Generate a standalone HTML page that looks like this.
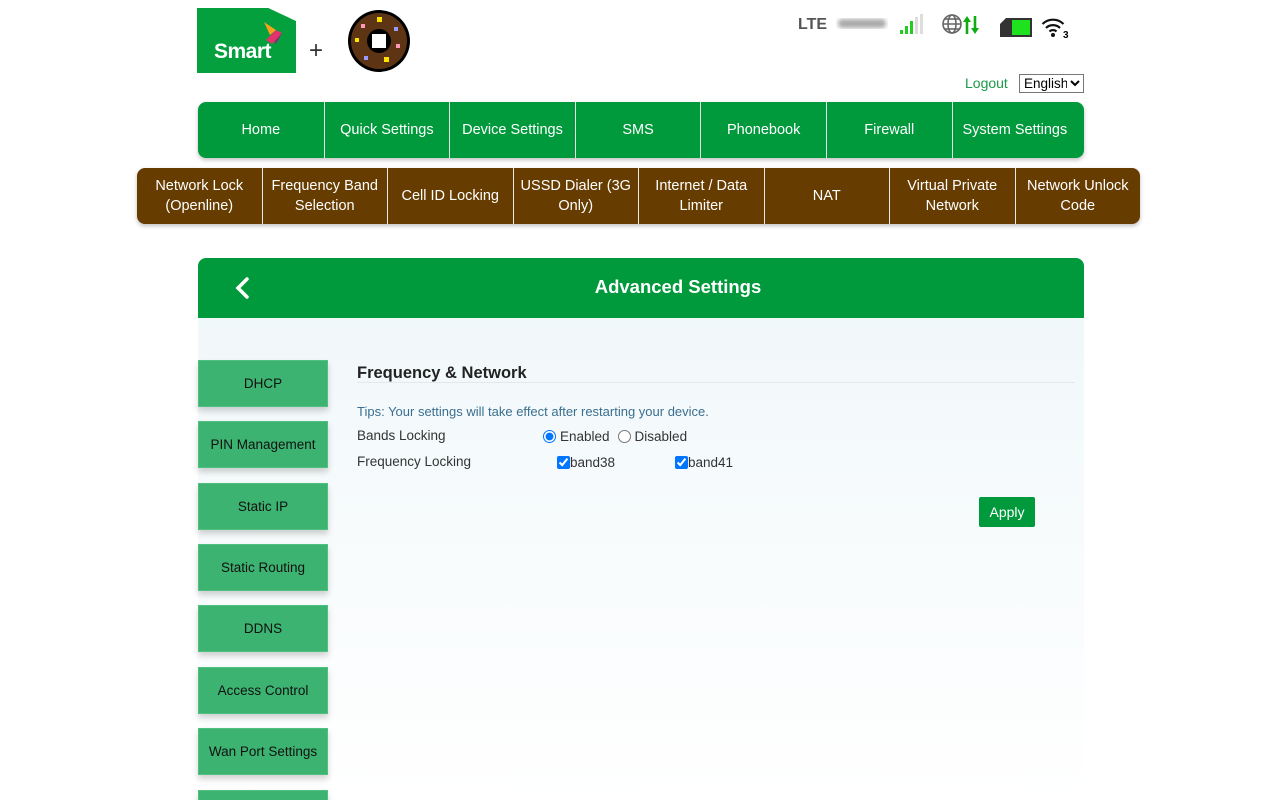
<!DOCTYPE html>
<html><head><meta charset="utf-8"><style>
*{box-sizing:border-box;margin:0;padding:0}
html{overflow:hidden;width:1280px;height:800px}
body{width:1280px;height:800px;overflow:hidden;background:#fff;font-family:"Liberation Sans",Arial,sans-serif;position:relative}
.abs{position:absolute}
.nav{position:absolute;display:flex;border-radius:8px;overflow:hidden;box-shadow:0 2px 4px rgba(0,0,0,.25)}
.nav div{flex:1;display:flex;align-items:center;justify-content:center;text-align:center;color:#fff;font-size:14.5px;line-height:20px;border-left:1px solid #e8e8e8}
.nav.top div{flex:0 0 125.6px}
.nav div:first-child{border-left:none}
.side{position:absolute;left:198px;width:130px;height:47px;background:#3cb371;color:#111;font-size:13.5px;display:flex;align-items:center;justify-content:center;box-shadow:0 4px 6px rgba(0,0,0,.18);border:1px solid #4fc080}
.lbl{position:absolute;font-size:13.5px;color:#333}
</style></head><body>
<div class="abs" style="left:197px;top:8px;width:99px;height:65px;background:#04a03e;clip-path:polygon(0 0,72% 0,100% 20%,100% 100%,0 100%)"></div>
<div class="abs" style="left:214px;top:40px;color:#fff;font-weight:bold;font-size:21px;letter-spacing:-.5px">Smart</div>
<svg class="abs" style="left:262px;top:22px" width="22" height="24" viewBox="0 0 22 24"><polygon points="2,0 14,8 8,13" fill="#f7a21b"/><polygon points="8,13 20,11 14,22" fill="#8a2a7a"/><polygon points="4,18 14,8 20,11 10,22" fill="#e2336b"/></svg>
<div class="abs" style="left:309px;top:37px;font-size:24px;color:#333">+</div>
<svg class="abs" style="left:346px;top:8px" width="66" height="66" viewBox="0 0 66 66"><circle cx="33" cy="33" r="31" fill="#000"/><circle cx="33" cy="33" r="28" fill="#5e3514"/><circle cx="33" cy="33" r="12" fill="#000"/><rect x="26" y="26" width="14" height="14" fill="#fff"/>
<rect x="31" y="9" width="5" height="5" fill="#ffe300"/><rect x="15" y="16" width="4" height="4" fill="#f9b"/><rect x="48" y="19" width="4" height="4" fill="#99f"/><rect x="9" y="30" width="4" height="4" fill="#ffe300"/><rect x="50" y="36" width="4" height="4" fill="#f9b"/><rect x="18" y="48" width="4" height="4" fill="#99f"/><rect x="38" y="49" width="5" height="5" fill="#ffe300"/></svg>
<div class="abs" style="left:798px;top:16px;font-weight:bold;font-size:16px;color:#555">LTE</div>
<svg class="abs" style="left:836px;top:16px" width="52" height="16"><defs><filter id="b"><feGaussianBlur stdDeviation="2"/></filter></defs><rect x="2" y="3" width="48" height="9" rx="4" fill="#aaa" filter="url(#b)"/></svg>
<svg class="abs" style="left:900px;top:14px" width="24" height="22"><rect x="0" y="16" width="3" height="4" fill="#2c2"/><rect x="5" y="12" width="3" height="8" fill="#2c2"/><rect x="10" y="7" width="3" height="13" fill="#2c2"/><rect x="15" y="3" width="3" height="17" fill="#ddd"/><rect x="20" y="0" width="3" height="20" fill="#ddd"/></svg>
<svg class="abs" style="left:942px;top:13px" width="42" height="24"><g fill="none" stroke="#666" stroke-width="1.6"><circle cx="10" cy="11" r="9"/><ellipse cx="10" cy="11" rx="4" ry="9"/><line x1="1" y1="11" x2="19" y2="11"/><line x1="2.5" y1="6" x2="17.5" y2="6"/><line x1="2.5" y1="16" x2="17.5" y2="16"/></g><g stroke="#1a1" stroke-width="2.6" fill="#1a1"><line x1="25" y1="8" x2="25" y2="21"/><polygon points="21,9 25,3 29,9" stroke="none"/><line x1="33" y1="3" x2="33" y2="16"/><polygon points="29,15 33,21 37,15" stroke="none"/></g></svg>
<svg class="abs" style="left:999px;top:17px" width="36" height="22"><path d="M7 1H33V20H1V7Z" fill="#333"/><rect x="13" y="3" width="18" height="15" fill="#1fe21f"/></svg>
<svg class="abs" style="left:1041px;top:17px" width="30" height="22"><g fill="none" stroke="#111" stroke-width="2.2"><path d="M1.5 7a15 15 0 0 1 21 0"/><path d="M5 11a10 10 0 0 1 14 0"/><path d="M8.5 14.5a5 5 0 0 1 7 0"/></g><circle cx="12" cy="18" r="2" fill="#111"/><text x="22" y="21" font-size="10" font-weight="bold" font-family="Liberation Sans">3</text></svg>
<div class="abs" style="left:965px;top:75px;font-size:14px;color:#1a9a4a">Logout</div>
<select class="abs" style="left:1019px;top:74px;width:65px;height:19px;font-size:13.5px;font-family:'Liberation Sans';border:1px solid #777;background:#fff"><option>English</option></select>
<div class="nav top" style="left:198px;top:102px;width:886px;height:56px;background:#009a3c">
<div>Home</div><div>Quick Settings</div><div>Device Settings</div><div>SMS</div><div>Phonebook</div><div>Firewall</div><div>System Settings</div></div>
<div class="nav" style="left:137px;top:168px;width:1003px;height:56px;background:#663c00">
<div>Network Lock<br>(Openline)</div><div>Frequency Band<br>Selection</div><div>Cell ID Locking</div><div>USSD Dialer (3G<br>Only)</div><div>Internet / Data<br>Limiter</div><div>NAT</div><div>Virtual Private<br>Network</div><div>Network Unlock<br>Code</div></div>
<div class="abs" style="left:198px;top:258px;width:886px;height:60px;background:#009a3c;border-radius:8px 8px 0 0"></div>
<svg class="abs" style="left:232px;top:276px" width="20" height="24"><path d="M15 3L6 12L15 21" fill="none" stroke="#fff" stroke-width="3.5" stroke-linecap="round"/></svg>
<div class="abs" style="left:198px;top:276px;width:960px;text-align:center;color:#fff;font-weight:bold;font-size:18.5px">Advanced Settings</div>
<div class="abs" style="left:198px;top:318px;width:886px;height:482px;background:linear-gradient(#f1f8fa,#fff)"></div>
<div class="side" style="top:360px">DHCP</div>
<div class="side" style="top:421px">PIN Management</div>
<div class="side" style="top:483px">Static IP</div>
<div class="side" style="top:544px">Static Routing</div>
<div class="side" style="top:605px">DDNS</div>
<div class="side" style="top:667px">Access Control</div>
<div class="side" style="top:728px">Wan Port Settings</div>
<div class="side" style="top:790px"></div>
<div class="abs" style="left:357px;top:364px;font-weight:bold;font-size:16.5px;color:#222">Frequency &amp; Network</div>
<div class="abs" style="left:357px;top:382px;width:718px;height:1px;background:#e4e8ea"></div>
<div class="lbl" style="left:357px;top:404px;color:#3a6f8f;font-size:13px">Tips: Your settings will take effect after restarting your device.</div>
<div class="lbl" style="left:357px;top:428px">Bands Locking</div>
<div class="lbl" style="left:357px;top:454px">Frequency Locking</div>
<div class="lbl" style="left:542px;top:429px;display:flex;align-items:center"><input type="radio" checked style="width:13px;height:13px;margin:0 4px 0 1px">Enabled<input type="radio" style="width:13px;height:13px;margin:0 4px 0 8px">Disabled</div>
<div class="lbl" style="left:557px;top:455px;display:flex;align-items:center"><input type="checkbox" checked style="width:13px;height:13px;margin:0">band38</div>
<div class="lbl" style="left:675px;top:455px;display:flex;align-items:center"><input type="checkbox" checked style="width:13px;height:13px;margin:0">band41</div>
<div class="abs" style="left:979px;top:497px;width:56px;height:30px;background:#009a3c;color:#fff;font-size:14px;display:flex;align-items:center;justify-content:center;border-radius:2px">Apply</div>
</body></html>
